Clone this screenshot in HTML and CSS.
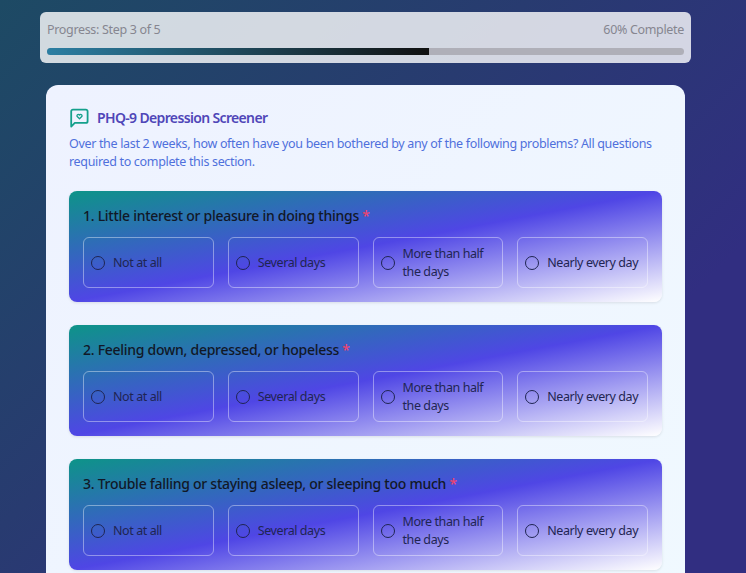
FILE: index.html
```html
<!DOCTYPE html>
<html lang="en">
<head>
  <meta charset="UTF-8">
  <meta name="viewport" content="width=device-width, initial-scale=1.0">
  <title>PHQ-9 Depression Screener</title>
  <link rel="stylesheet" href="styles.css">
</head>
<body>

  <!-- Progress -->
  <div class="progress-panel">
    <div class="progress-labels">
      <span>Progress: Step 3 of 5</span>
      <span>60% Complete</span>
    </div>
    <div class="progress-track">
      <div class="progress-fill"></div>
    </div>
  </div>

  <!-- Screener card -->
  <div class="screener-card">
    <div class="screener-title">
      <svg class="title-icon" viewBox="0 0 20 20" fill="none" stroke="#14a08c" stroke-width="1.8" stroke-linejoin="round">
        <path d="M2.2 18.6V3.4a1.7 1.7 0 0 1 1.7-1.7h13a1.7 1.7 0 0 1 1.7 1.7v9.8a1.7 1.7 0 0 1-1.7 1.7H5.8z"/>
        <path d="M10.5 10.8 8 8.3a1.4 1.4 0 0 1 2.5-1.2 1.4 1.4 0 0 1 2.5 1.2z" stroke-width="1.3"/>
      </svg>
      <h2>PHQ-9 Depression Screener</h2>
    </div>
    <p class="screener-intro">Over the last 2 weeks, how often have you been bothered by any of the following problems? All questions required to complete this section.</p>

    <div class="question">
      <h3>1. Little interest or pleasure in doing things <span class="required">*</span></h3>
      <div class="options">
        <label class="option"><span class="radio"></span><span>Not at all</span></label>
        <label class="option"><span class="radio"></span><span>Several days</span></label>
        <label class="option"><span class="radio"></span><span>More than half the days</span></label>
        <label class="option"><span class="radio"></span><span>Nearly every day</span></label>
      </div>
    </div>

    <div class="question">
      <h3>2. Feeling down, depressed, or hopeless <span class="required">*</span></h3>
      <div class="options">
        <label class="option"><span class="radio"></span><span>Not at all</span></label>
        <label class="option"><span class="radio"></span><span>Several days</span></label>
        <label class="option"><span class="radio"></span><span>More than half the days</span></label>
        <label class="option"><span class="radio"></span><span>Nearly every day</span></label>
      </div>
    </div>

    <div class="question">
      <h3>3. Trouble falling or staying asleep, or sleeping too much <span class="required">*</span></h3>
      <div class="options">
        <label class="option"><span class="radio"></span><span>Not at all</span></label>
        <label class="option"><span class="radio"></span><span>Several days</span></label>
        <label class="option"><span class="radio"></span><span>More than half the days</span></label>
        <label class="option"><span class="radio"></span><span>Nearly every day</span></label>
      </div>
    </div>
  </div>

</body>
</html>
```

FILE: styles.css
```css
/* General Styles */
html {
  height: 100%;
  overflow: hidden;
}

body {
  margin: 0;
  height: 100%;
  overflow: hidden;
  padding: 12px 55px 0 40px;
  box-sizing: border-box;
  font-family: "Noto Sans", "Open Sans", sans-serif;
  background: linear-gradient(135deg, #1d4a64 0%, #283b70 40%, #312e81 75%);
}

/* Progress */
.progress-panel {
  background-color: rgba(255, 255, 255, 0.8);
  border-radius: 6px;
  padding: 9px 7px 8px;
  height: 51px;
  box-sizing: border-box;
}

.progress-labels {
  display: flex;
  justify-content: space-between;
  font-size: 12.5px;
  letter-spacing: -0.33px;
  line-height: 18px;
  color: #868690;
}

.progress-track {
  margin-top: 9px;
  height: 7px;
  border-radius: 4px;
  background-color: #afafb8;
  overflow: hidden;
}

.progress-fill {
  width: 60%;
  height: 100%;
  background: linear-gradient(to right, #2c7fa3, #111);
}

/* Card */
.screener-card {
  margin: 22px 6px 0;
  padding: 22px 23px 24px;
  background: linear-gradient(135deg, #eef2ff, #f0f9ff);
  border-radius: 12px;
}

.screener-title {
  display: flex;
  align-items: center;
  gap: 8px;
  height: 21px;
}

.title-icon {
  width: 20px;
  height: 20px;
  flex: none;
}

.screener-title h2 {
  margin: 0;
  font-size: 14px;
  line-height: 20px;
  font-weight: 600;
  letter-spacing: -0.65px;
  color: #4f46b8;
}

.screener-intro {
  margin: 7px 0 21px;
  font-size: 12.5px;
  letter-spacing: -0.33px;
  line-height: 17.5px;
  color: #4f70dc;
}

/* Questions */
.question {
  margin-bottom: 23px;
  padding: 14px;
  height: 111px;
  box-sizing: border-box;
  border-radius: 8px;
  background: linear-gradient(to bottom right, #0d9488, #4f46e5, #fff);
  box-shadow: 0 1px 3px rgba(0, 0, 0, 0.1);
}

.question h3 {
  margin: 0 0 10px;
  font-size: 14px;
  letter-spacing: -0.27px;
  line-height: 22px;
  font-weight: 500;
  color: #111827;
}

.required {
  color: #ef4470;
}

.options {
  display: grid;
  grid-template-columns: repeat(4, 1fr);
  gap: 14px;
}

.option {
  display: flex;
  align-items: center;
  gap: 8px;
  height: 51px;
  padding: 0 7px;
  box-sizing: border-box;
  border: 1px solid rgba(255, 255, 255, 0.4);
  border-radius: 6px;
  font-size: 12.5px;
  letter-spacing: -0.42px;
  line-height: 17.5px;
  color: #1f2552;
}

.radio {
  flex: none;
  width: 14px;
  height: 14px;
  box-sizing: border-box;
  border: 1px solid #1f2552;
  border-radius: 50%;
}
```
